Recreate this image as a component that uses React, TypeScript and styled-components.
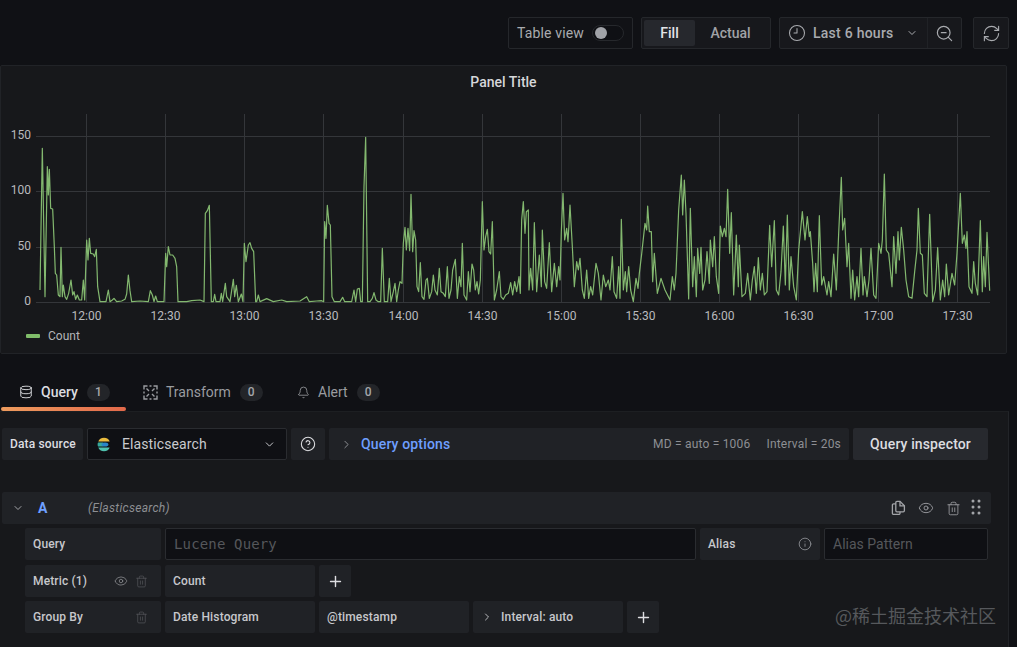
import React from "react";
import styled, { createGlobalStyle } from "styled-components";
import { Bell, ChevronDown, ChevronRight, CircleHelp, Clock9, Database, Eye, Info, Plus, RefreshCw, Trash2, ZoomOut } from "lucide-react";

const Global = createGlobalStyle`
  html, body { margin: 0; padding: 0; background: #101115; }
  * { box-sizing: border-box; }
`;

const Page = styled.div`
  position: relative; width: 1017px; height: 647px; overflow: hidden;
  display: flex; flex-direction: column;
  background: #101115; color: #c7c8cc;
  font-family: Roboto, "Noto Sans CJK SC", sans-serif;
`;
const Toolbar = styled.div`
  display: flex; justify-content: flex-end; gap: 8px;
  height: 32px; margin-top: 17px; padding-right: 8px;
`;
const ToolGroup = styled.div<{ $w: number; $dim?: boolean; $ml?: number }>`
  display: flex; align-items: center; width: ${p => p.$w}px; height: 32px;
  margin-left: ${p => p.$ml ?? 0}px;
  background: ${p => (p.$dim ? "#111216" : "#17181c")};
  border: 1px solid #25272b; border-radius: 2px;
`;
const ToolLabel = styled.span`
  font-size: 14px; color: #a9abaf; margin-left: 8px; letter-spacing: 0.15px;
`;
const SwitchTrack = styled.span`
  position: relative; width: 32px; height: 16px; margin-left: 8px;
  border: 1px solid #26282c; border-radius: 8px; background: #0f1014;
`;
const SwitchKnob = styled.span`
  position: absolute; left: 2px; top: 1px; width: 12px; height: 12px;
  border-radius: 50%; background: #a1a3a8;
`;
const Segment = styled.span<{ $active?: boolean }>`
  display: flex; align-items: center; justify-content: center;
  height: 26px; width: ${p => (p.$active ? 51 : 71)}px;
  margin-left: ${p => (p.$active ? 2 : 0)}px;
  font-size: 14px; font-weight: 500; border-radius: 2px;
  color: ${p => (p.$active ? "#e4e5e8" : "#a0a2a6")};
  background: ${p => (p.$active ? "#26282d" : "transparent")};
`;
const TimeButton = styled.div`
  display: flex; align-items: center; width: 148px; height: 100%;
  padding-left: 8px; color: #a9abaf; border-right: 1px solid #202226;
  font-size: 14px; font-weight: 500;
`;
const TimeText = styled.span`margin: 0 12px 0 7px; white-space: nowrap; letter-spacing: 0.25px;`;
const IconCell = styled.div`
  display: flex; flex: 1; align-items: center; justify-content: center; color: #a9abaf; height: 100%;
`;

const Panel = styled.section`
  display: flex; flex-direction: column; flex: none;
  width: 1007px; height: 289px; margin-top: 16px;
  background: #17181b; border: 1px solid #212327; border-radius: 2px;
`;
const PanelTitle = styled.h2`
  height: 33px; margin: 0 0 11px; line-height: 32px; text-align: center;
  font-size: 14px; font-weight: 500; color: #d6d7da;
`;
const ChartSvg = styled.svg`display: block; flex: none;`;
const AxisText = styled.text`
  font-family: Roboto, sans-serif; font-size: 12px; fill: #b9babe;
`;
const Legend = styled.div`
  display: flex; align-items: center; height: 22px; padding-left: 25px;
  font-size: 12px; color: #b4b5b9;
`;
const LegendSwatch = styled.span`
  width: 14px; height: 4px; margin-right: 8px; background: #80bd6a; border-radius: 1px;
`;

const Tabs = styled.nav`
  display: flex; height: 57px; padding: 19px 0 0 1px; flex: none;
`;
const Tab = styled.div<{ $w: number; $pl: number; $active?: boolean }>`
  position: relative; display: flex; align-items: center;
  width: ${p => p.$w}px; height: 38px; padding-left: ${p => p.$pl}px;
  font-size: 14px; font-weight: ${p => (p.$active ? 500 : 400)};
  color: ${p => (p.$active ? "#dcdde0" : "#9a9ca0")};
`;
const TabUnderline = styled.span`
  position: absolute; left: 0; right: 0; bottom: 0; height: 4px; border-radius: 2px;
  background: linear-gradient(90deg, #ee9c5e, #e2694a);
`;
const TabText = styled.span`margin: 0 9px 0 8px; white-space: nowrap;`;
const Badge = styled.span`
  display: flex; align-items: center; justify-content: center;
  width: 23px; height: 17px; border-radius: 9px; background: #232529;
  font-size: 12px; font-weight: 500; color: #a5a7ab;
`;

const Editor = styled.main`
  flex: 1; width: 1009px; padding: 16px 0 0 2px;
  background: #17181b; border-top: 1px solid #1d1f22; border-right: 1px solid #222428;
`;
const Row = styled.div<{ $mb?: number; $ml?: number }>`
  display: flex; gap: 4px;
  margin-bottom: ${p => p.$mb ?? 0}px; margin-left: ${p => p.$ml ?? 0}px;
`;
const Cell = styled.div<{ $w: number; $strong?: boolean; $center?: boolean }>`
  display: flex; align-items: center; flex: none;
  justify-content: ${p => (p.$center ? "center" : "flex-start")};
  width: ${p => p.$w}px; height: 32px;
  padding: 0 ${p => (p.$center ? 0 : 8)}px;
  background: #202226; border-radius: 2px; white-space: nowrap;
  font-size: 12px; font-weight: 500; letter-spacing: 0.15px;
  color: ${p => (p.$strong ? "#dddee1" : "#c7c8cc")};
`;
const SelectBox = styled.div`
  display: flex; align-items: center; flex: none; width: 200px; height: 32px; padding: 0 10px 0 9px;
  background: #0f1014; border: 1px solid #2a2c30; border-radius: 2px;
  font-size: 14px; color: #c9cace;
`;
const SelectText = styled.span`margin-left: 11px; flex: 1; letter-spacing: 0.1px;`;
const OptionsBar = styled.div`
  display: flex; align-items: center; flex: none; width: 520px; height: 32px; padding: 0 8px 0 11px;
  background: #202226; border-radius: 2px; font-size: 12px; color: #8d8f93; letter-spacing: 0.2px;
`;
const OptionsTitle = styled.span`
  margin-left: 8px; flex: 1; font-size: 14px; font-weight: 500; color: #6e9fff; letter-spacing: 0.15px;
`;
const OptionsMeta = styled.span`margin-left: 16px;`;
const InspectorButton = styled.div`
  display: flex; align-items: center; justify-content: center; flex: none;
  width: 135px; height: 32px; background: #27292e; border-radius: 2px;
  font-size: 14px; font-weight: 500; color: #dcdde0; letter-spacing: 0.12px;
`;
const QueryHeader = styled.div`
  display: flex; align-items: center; width: 989px; height: 32px; margin-top: 32px; margin-bottom: 4px;
  padding-left: 10px; background: #202226; border-radius: 2px;
`;
const QueryLetter = styled.span`
  width: 50px; margin-left: 14px; font-size: 14px; font-weight: 700; color: #6e9fff;
`;
const QuerySource = styled.span`
  flex: 1; font-size: 12px; font-style: italic; color: #8d8f93; letter-spacing: 0.3px;
`;
const HeaderActions = styled.div`
  display: flex; align-items: center; gap: 12px; padding-right: 10px; color: #a2a4a8;
`;
const DragHandle = styled.span`display: flex; margin: -2px 0 0 -2px; color: #a2a4a8;`;
const LabelSpacer = styled.span`flex: 1;`;
const RowIcons = styled.span`
  display: flex; gap: 7px; align-items: center; margin-right: 5px; color: #8d8f93;
`;
const ChevronLabel = styled.span`margin-left: 8px;`;
const TextField = styled.div<{ $w: number; $mono?: boolean }>`
  display: flex; align-items: center; flex: none; width: ${p => p.$w}px; height: 32px; padding: 0 8px;
  background: #0f1014; border: 1px solid #2a2c30; border-radius: 2px;
  font-size: 14px; color: #55575b;
  font-family: ${p => (p.$mono ? '"DejaVu Sans Mono", monospace' : "inherit")};
  letter-spacing: ${p => (p.$mono ? "0.15px" : "0")};
`;
const Watermark = styled.div`
  position: absolute; left: 835px; top: 603px; font-size: 18px; line-height: 24px;
  color: #56585c; white-space: nowrap;
  font-family: "Noto Sans CJK SC", sans-serif;
`;

const offset = (ox: number, pts: number[][]) => pts.map(([x, y]) => [ox + x / 3, 100 + y / 3]);
const SERIES = [
  ...offset(0, [[120,570],[127,145],[135,590],[142,200],[145,285],[148,208],[152,325],[158,327],[163,440],[166,520],[170,525],[175,585],[180,590],[183,442],[187,590],[190,555],[195,590],[200,598],[206,580],[213,540],[218,585],[222,575],[227,598],[232,585],[238,600],[245,600],[250,540],[254,600],[260,420],[264,480],[268,415],[272,460],[280,462],[284,470],[289,448],[293,560],[300,605],[318,605],[325,570],[330,605],[337,600],[342,595],[350,605],[365,603],[375,598],[380,582],[385,525],[390,572],[395,605],[420,603],[445,605],[451,572],[457,585],[462,605],[467,588],[472,605],[492,605],[497,460],[500,500],[505,440],[510,465],[518,465],[525,475],[530,500],[534,605],[560,605],[575,602],[600,600],[612,605],[616,340],[622,332],[628,316],[634,605],[640,605],[644,583],[648,605],[660,605],[664,580],[668,605],[676,550],[680,590],[690,605],[700,538],[704,590],[709,556],[715,605],[724,582],[729,605],[733,430],[738,485],[745,435],[750,428],[755,445],[761,455],[767,605],[770,605],[775,585],[780,605],[800,596],[820,605],[845,600],[860,605],[900,603],[920,590],[928,605],[950,603],[965,602],[971,605],[974,365],[978,415],[982,316],[987,370],[991,375],[996,590],[1003,605],[1020,605]]),
  ...offset(340, [[0,605],[8,592],[14,605],[35,605],[42,570],[47,605],[52,567],[58,565],[62,605],[67,605],[72,260],[77,112],[83,605],[90,605],[97,595],[102,578],[108,600],[115,605],[122,605],[127,445],[133,605],[143,605],[148,535],[153,605],[160,575],[165,550],[170,605],[175,570],[180,545],[186,550],[190,430],[195,382],[199,450],[204,385],[209,452],[213,283],[218,455],[222,392],[227,420],[231,560],[236,575],[241,488],[246,590],[252,598],[258,540],[262,535],[268,595],[275,575],[280,525],[285,570],[292,585],[298,505],[303,575],[310,580],[316,590],[322,500],[327,595],[333,570],[338,510],[346,478],[352,595],[358,530],[363,560],[367,430],[372,585],[380,600],[385,515],[390,575],[396,492],[401,510],[406,570],[411,545],[416,582],[421,540],[427,305],[432,450],[437,410],[442,388],[447,455],[452,462],[457,365],[463,600],[470,570],[478,515],[483,590],[490,598],[497,585],[505,580],[512,548],[518,585],[524,545],[530,575],[537,530],[541,580],[545,360],[550,305],[555,400],[559,335],[565,330],[567,570],[572,505],[578,570],[583,368],[590,575],[598,465],[604,560],[607,390],[614,545],[620,565],[628,428],[635,575],[643,490],[650,560],[656,500],[660,540],[664,395],[669,280],[674,420],[680,385],[684,425],[690,315],[697,440],[703,560],[710,485],[715,510],[720,475],[727,570],[733,595],[740,510],[746,595],[752,560],[758,585],[768,490],[775,520],[783,600],[790,525],[797,560],[805,540],[810,570],[817,470],[822,575],[830,595],[836,500],[840,595],[844,358],[850,570],[856,515],[860,575],[866,500],[872,570],[880,605],[888,535],[894,565],[898,520],[905,462],[915,370],[920,390],[923,318],[928,395],[934,395],[938,545],[943,460],[952,580],[963,535],[975,570],[990,600],[997,530],[1003,570],[1008,520]]),
  ...offset(677, [[5,330],[13,225],[17,345],[22,240],[27,340],[35,597],[40,325],[47,560],[52,470],[58,590],[62,445],[68,520],[72,442],[77,570],[84,540],[90,455],[97,550],[100,420],[107,500],[112,410],[118,530],[125,580],[130,378],[136,410],[142,385],[147,410],[152,268],[158,460],[163,338],[170,585],[178,405],[184,560],[187,435],[195,590],[205,580],[212,520],[220,600],[226,540],[232,500],[238,580],[244,473],[250,570],[256,520],[262,585],[270,575],[278,376],[284,500],[292,362],[298,570],[305,585],[312,515],[319,378],[325,555],[331,345],[337,570],[342,470],[350,560],[358,600],[365,450],[376,335],[384,420],[391,350],[397,410],[400,395],[407,490],[411,575],[416,490],[421,575],[427,347],[434,555],[440,530],[450,585],[455,545],[462,590],[470,462],[478,570],[485,400],[493,232],[497,390],[503,355],[510,500],[515,430],[522,595],[527,510],[533,600],[540,530],[545,590],[552,445],[558,585],[562,530],[570,590],[576,540],[582,445],[590,585],[597,595],[605,430],[612,460],[616,420],[622,222],[628,450],[635,460],[645,560],[650,410],[657,520],[663,395],[667,480],[673,382],[680,450],[687,540],[695,590],[705,595],[713,515],[720,450],[724,325],[730,460],[736,465],[742,580],[750,590],[758,343],[767,605],[775,570],[782,443],[790,600],[797,540],[803,590],[808,492],[815,585],[825,520],[833,555],[840,460],[850,280],[856,430],[862,405],[867,445],[870,395],[876,560],[885,580],[890,485],[895,550],[902,585],[910,362],[916,575],[920,470],[925,560],[930,397],[938,572]]),
];

const TICKS = [
  ["12:00", 86.5], ["12:30", 165.5], ["13:00", 244.5], ["13:30", 323.5], ["14:00", 403.5], ["14:30", 482.5],
  ["15:00", 561.5], ["15:30", 640.5], ["16:00", 719.5], ["16:30", 798.5], ["17:00", 878.5], ["17:30", 957.5],
] as const;
const LEVELS = [["150", 136.5], ["100", 191.5], ["50", 247.5], ["0", 302.5]] as const;
const SX = 1, SY = 110;

function Chart() {
  return (
    <ChartSvg width={1005} height={215} viewBox={`${SX} ${SY} 1005 215`}>
      {LEVELS.map(([l, y]) => (
        <g key={l}>
          <line x1={36} x2={990} y1={y} y2={y} stroke="#34363a" />
          <AxisText x={31} y={y + 2} textAnchor="end">{l}</AxisText>
        </g>
      ))}
      {TICKS.map(([l, x]) => (
        <g key={l}>
          <line x1={x} x2={x} y1={114} y2={303} stroke="#34363a" />
          <AxisText x={x} y={320} textAnchor="middle">{l}</AxisText>
        </g>
      ))}
      <polyline points={SERIES.map(p => p.join(",")).join(" ")} fill="none" stroke="#83b86f" strokeWidth={1.2} strokeLinejoin="round" />
    </ChartSvg>
  );
}

const TransformIcon = () => (
  <svg width="15" height="15" viewBox="0 0 15 15" fill="none" stroke="currentColor" strokeWidth="1.4">
    <path d="M1 4.5V1h3.5M10.5 1H14v3.5M14 10.5V14h-3.5M4.5 14H1v-3.5" />
    <path d="M6.5 1h2M6.5 14h2M1 6.5v2M14 6.5v2M3.5 3.5l2.5 2.5M11.5 3.5L9 6M3.5 11.5L6 9M11.5 11.5L9 9" />
  </svg>
);
const ElasticLogo = () => (
  <svg width="14" height="15" viewBox="0 0 14 15">
    <path d="M1.3 4.6C1.9 2.3 4.2 0.8 7 0.8s5.1 1.5 5.7 3.8z" fill="#e9bb3e" />
    <path d="M0.6 7.5c0-1 .2-1.7.5-2h5l1.2 2-1.2 2h-5c-.3-.3-.5-1-.5-2z" fill="#35a99b" />
    <ellipse cx="8" cy="7.5" rx="3.4" ry="2" fill="#2a86c8" />
    <path d="M1.3 10.4c.6 2.3 2.9 3.8 5.7 3.8s5.1-1.5 5.7-3.8z" fill="#4fc1ae" />
  </svg>
);
const CopyIcon = () => (
  <svg width="15" height="16" viewBox="0 0 15 16" fill="none" stroke="currentColor" strokeWidth="1.3">
    <path d="M4.8 3.8H2.6a1.2 1.2 0 0 0-1.2 1.2v8.2a1.2 1.2 0 0 0 1.2 1.2h5.2A1.2 1.2 0 0 0 9 13.2v-1.4" />
    <path d="M4.8 2.6a1.2 1.2 0 0 1 1.2-1.2h3l4.4 4.4v4.8a1.2 1.2 0 0 1-1.2 1.2H6a1.2 1.2 0 0 1-1.2-1.2z" />
    <path d="M9 1.4v4.4h4.4" />
  </svg>
);
const DragDots = () => (
  <svg width="10" height="16" viewBox="0 0 10 16" fill="currentColor">
    {[2, 8, 14].flatMap(y => [2, 8].map(x => <circle key={`${x}${y}`} cx={x} cy={y} r="1.5" />))}
  </svg>
);

export default function App() {
  return (
    <Page>
      <Global />
      <Toolbar>
        <ToolGroup $w={125} $dim>
          <ToolLabel>Table view</ToolLabel>
          <SwitchTrack><SwitchKnob /></SwitchTrack>
        </ToolGroup>
        <ToolGroup $w={130}>
          <Segment $active>Fill</Segment>
          <Segment>Actual</Segment>
        </ToolGroup>
        <ToolGroup $w={183}>
          <TimeButton>
            <Clock9 size={18} strokeWidth={1.4} />
            <TimeText>Last 6 hours</TimeText>
            <ChevronDown size={12} strokeWidth={2} />
          </TimeButton>
          <IconCell><ZoomOut size={19} strokeWidth={1.5} /></IconCell>
        </ToolGroup>
        <ToolGroup $w={36} $ml={3}>
          <IconCell><RefreshCw size={19} strokeWidth={1.4} /></IconCell>
        </ToolGroup>
      </Toolbar>

      <Panel>
        <PanelTitle>Panel Title</PanelTitle>
        <Chart />
        <Legend><LegendSwatch />Count</Legend>
      </Panel>

      <Tabs>
        <Tab $w={125} $pl={18} $active>
          <Database size={14} strokeWidth={1.6} />
          <TabText>Query</TabText>
          <Badge>1</Badge>
          <TabUnderline />
        </Tab>
        <Tab $w={153} $pl={17}>
          <TransformIcon />
          <TabText>Transform</TabText>
          <Badge>0</Badge>
        </Tab>
        <Tab $w={120} $pl={18}>
          <Bell size={13} strokeWidth={1.5} />
          <TabText>Alert</TabText>
          <Badge>0</Badge>
        </Tab>
      </Tabs>

      <Editor>
        <Row>
          <Cell $w={81} $strong>Data source</Cell>
          <SelectBox>
            <ElasticLogo />
            <SelectText>Elasticsearch</SelectText>
            <ChevronDown size={13} strokeWidth={1.8} />
          </SelectBox>
          <Cell $w={34} $center $strong><CircleHelp size={16} strokeWidth={1.6} /></Cell>
          <OptionsBar>
            <ChevronRight size={13} strokeWidth={1.8} />
            <OptionsTitle>Query options</OptionsTitle>
            <span>MD = auto = 1006</span>
            <OptionsMeta>Interval = 20s</OptionsMeta>
          </OptionsBar>
          <InspectorButton>Query inspector</InspectorButton>
        </Row>

        <QueryHeader>
          <ChevronDown size={12} strokeWidth={2} color="#a2a4a8" />
          <QueryLetter>A</QueryLetter>
          <QuerySource>(Elasticsearch)</QuerySource>
          <HeaderActions>
            <CopyIcon />
            <Eye size={16} strokeWidth={1.3} />
            <Trash2 size={15} strokeWidth={1.3} />
            <DragHandle><DragDots /></DragHandle>
          </HeaderActions>
        </QueryHeader>

        <Row $ml={23} $mb={5}>
          <Cell $w={136}>Query</Cell>
          <TextField $w={531} $mono>Lucene Query</TextField>
          <Cell $w={120}>
            Alias<LabelSpacer />
            <Info size={14} strokeWidth={1.5} color="#8d8f93" />
          </Cell>
          <TextField $w={164}>Alias Pattern</TextField>
        </Row>
        <Row $ml={23} $mb={4}>
          <Cell $w={136}>
            Metric (1)<LabelSpacer />
            <RowIcons>
              <Eye size={14} strokeWidth={1.3} />
              <Trash2 size={13} strokeWidth={1.3} color="#55575b" />
            </RowIcons>
          </Cell>
          <Cell $w={150}>Count</Cell>
          <Cell $w={32} $center $strong><Plus size={17} strokeWidth={2} /></Cell>
        </Row>
        <Row $ml={23}>
          <Cell $w={136}>
            Group By<LabelSpacer />
            <RowIcons><Trash2 size={13} strokeWidth={1.3} color="#55575b" /></RowIcons>
          </Cell>
          <Cell $w={150}>Date Histogram</Cell>
          <Cell $w={150}>@timestamp</Cell>
          <Cell $w={150}>
            <ChevronRight size={12} strokeWidth={1.8} />
            <ChevronLabel>Interval: auto</ChevronLabel>
          </Cell>
          <Cell $w={32} $center $strong><Plus size={17} strokeWidth={2} /></Cell>
        </Row>
      </Editor>
      <Watermark>@稀土掘金技术社区</Watermark>
    </Page>
  );
}
